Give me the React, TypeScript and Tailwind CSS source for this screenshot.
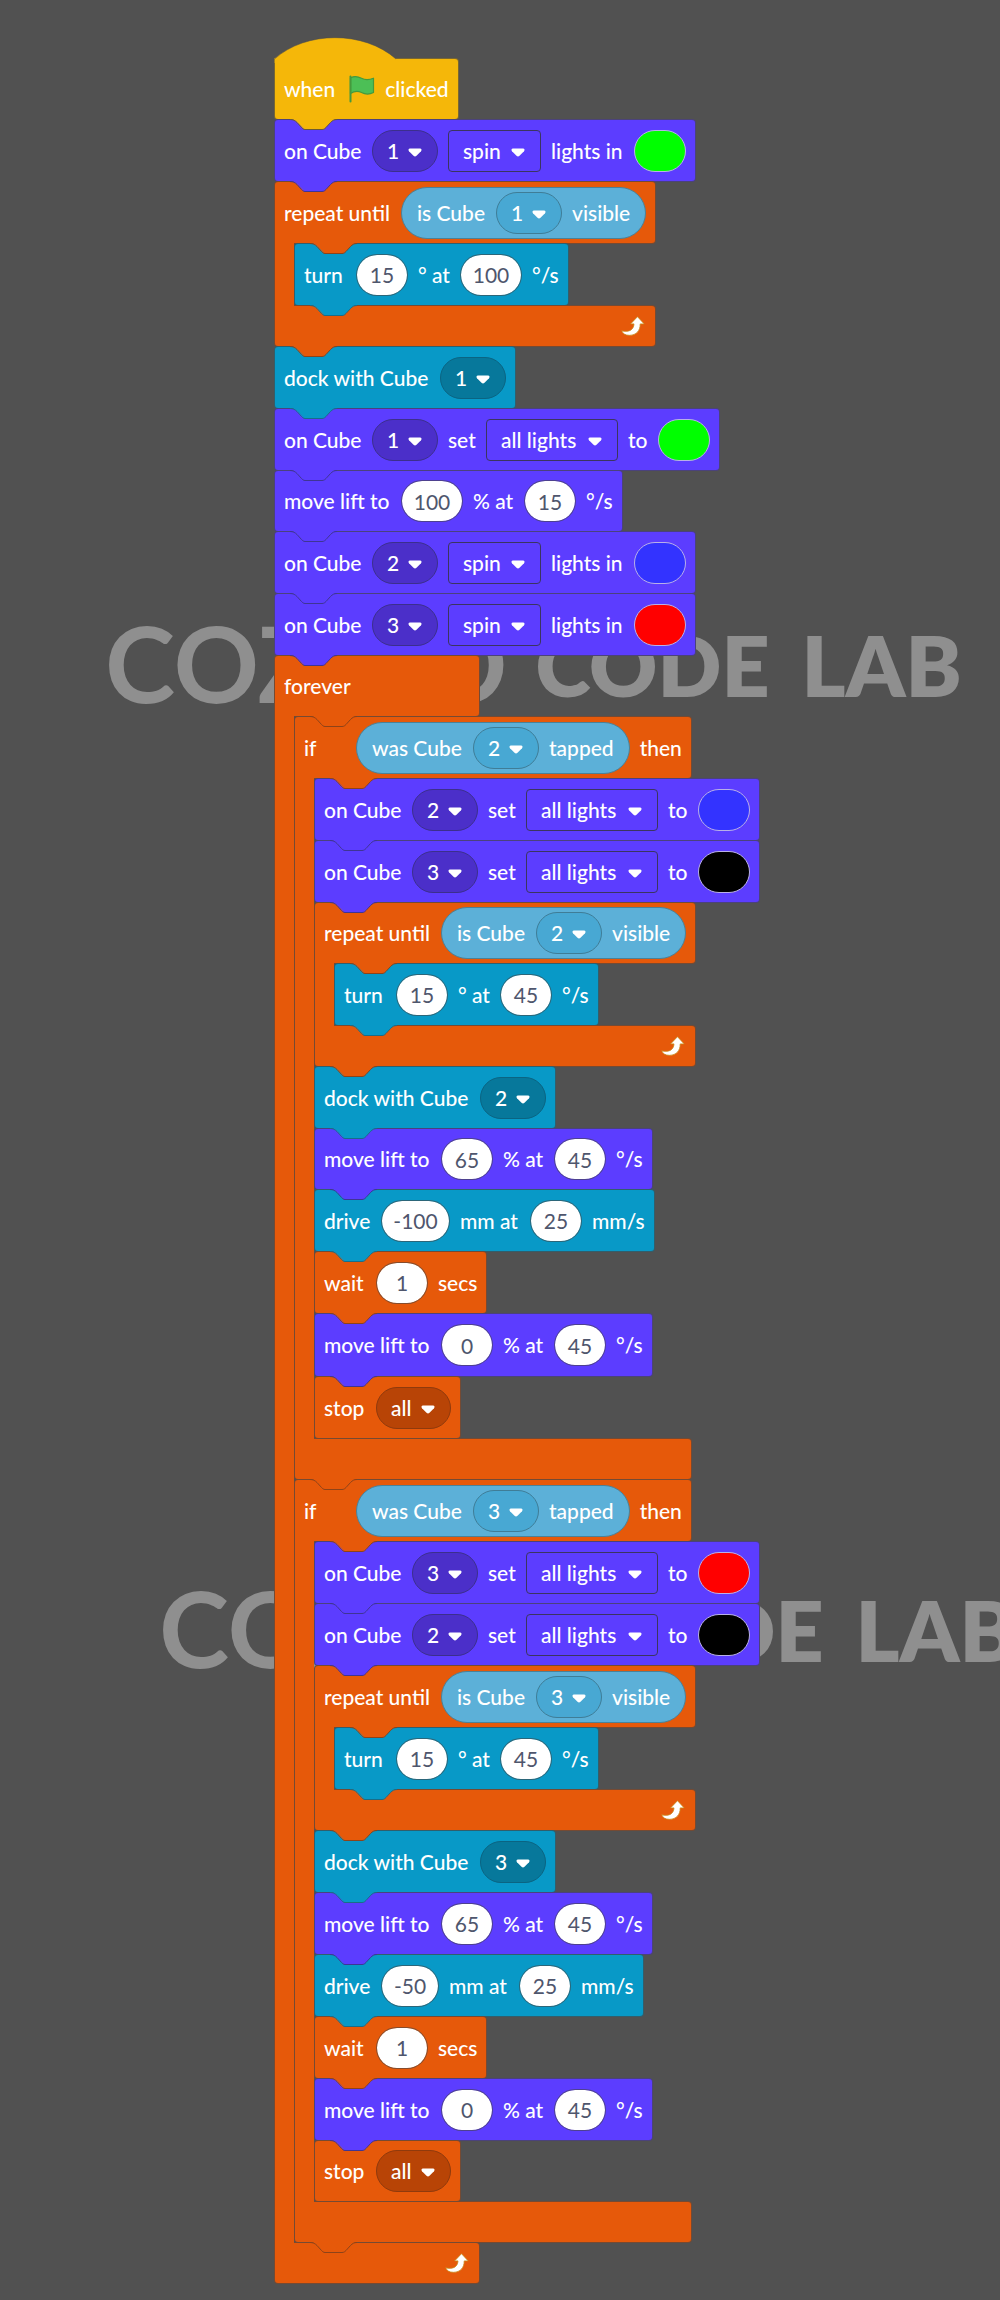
import type { ReactNode } from 'react';

type Tone = 'purple' | 'orange' | 'teal' | 'yellow';
type Size = 'compact' | 'normal' | 'tall';

const toneBg: Record<Tone, string> = {
  purple: 'bg-[#5c3dff]',
  orange: 'bg-[#e6590a]',
  teal: 'bg-[#0899c7]',
  yellow: 'bg-[#f5b709]',
};
const toneFill: Record<Tone, string> = {
  purple: 'fill-[#5c3dff]',
  orange: 'fill-[#e6590a]',
  teal: 'fill-[#0899c7]',
  yellow: 'fill-[#f5b709]',
};
const toneLine: Record<Tone, string> = {
  purple: 'stroke-[#3f3593]',
  orange: 'stroke-[#8d4319]',
  teal: 'stroke-[#1a6d88]',
  yellow: 'stroke-[#6b5a35]',
};
const sizeClass: Record<Size, string> = {
  compact: 'h-[62px]',
  normal: 'h-[63px]',
  tall: 'h-16',
};
const edge = 'border-[#444444]/70';

/* Tab under a block that plugs into the block below it */
function Tab({ tone, inset = false }: { tone: Tone; inset?: boolean }) {
  return (
    <svg
      aria-hidden="true"
      width="64"
      height="12"
      viewBox="0 0 64 12"
      className={`absolute top-full z-10 ${inset ? 'left-5' : 'left-0'}`}
    >
      <path
        className={toneFill[tone]}
        d="M15 0H62C60 0 58 1 56 3L51 8C50 9.500 49 10.500 47 10.500H31C29 10.500 28 9.500 27 8L22 3C20 1 18 0 15 0Z"
      />
      <path
        className={toneLine[tone]}
        fill="none"
        d="M15 .5C18 .5 20 1.500 22 3.500L26.500 8.500C27.500 9.500 28.500 10.500 30 10.500H47C49 10.500 50 9.500 51 8.500L55.500 3.500C57.500 1.500 59 .5 62 .5"
      />
    </svg>
  );
}

function Block({
  tone,
  size = 'normal',
  last = false,
  children,
}: {
  tone: Tone;
  size?: Size;
  last?: boolean;
  children: ReactNode;
}) {
  return (
    <div
      className={`relative -mb-px flex items-center gap-2.5 rounded border px-[9px] ${edge} ${toneBg[tone]} ${sizeClass[size]}`}
    >
      {children}
      {!last && <Tab tone={tone} />}
    </div>
  );
}

function CBlock({
  head,
  size = 'normal',
  loop = false,
  last = false,
  children,
}: {
  head: ReactNode;
  size?: Size;
  loop?: boolean;
  last?: boolean;
  children: ReactNode;
}) {
  return (
    <div className="-mb-px grid w-max">
      <div
        className={`relative -mb-px flex min-w-[206px] items-center gap-2.5 rounded rounded-bl-none border px-[9px] ${edge} ${toneBg.orange} ${sizeClass[size]}`}
      >
        {head}
        <Tab tone="orange" inset />
      </div>
      <div className="flex w-0 min-w-full">
        <div className={`relative z-[1] -mb-px w-5 shrink-0 border-l ${edge} ${toneBg.orange}`} />
        <div className="flex flex-col items-start whitespace-nowrap">{children}</div>
      </div>
      <div
        className={`relative flex h-[42px] items-center justify-end rounded rounded-tl-none border pr-2.5 ${edge} ${toneBg.orange}`}
      >
        {loop && <LoopArrow />}
        {!last && <Tab tone="orange" />}
      </div>
    </div>
  );
}

function LoopArrow() {
  return (
    <svg aria-hidden="true" width="24" height="20" viewBox="0 0 24 20">
      <path
        d="M16.500 .7L23.200 7.900H19.200C19.300 14.500 15.500 19.200 8.500 19.300C4.500 19.400 1.600 17.600 .8 14.700C6.500 16.600 12.800 14.500 13 7.900H9.600Z"
        fill="#fff"
        stroke="#c98a1c"
        strokeWidth=".8"
        strokeLinejoin="round"
      />
    </svg>
  );
}

function Flag() {
  return (
    <svg aria-hidden="true" width="26" height="28" viewBox="0 0 26 28" className="ml-1">
      <path
        d="M1.500 3C6 .5 9.500 1.800 12.500 3.300C16 5 20 5 24.500 3.200V17.500C20 19.800 16 19.300 12.500 17.500C9.500 16 6 15.500 1.500 18.500Z"
        fill="#4cbf56"
        stroke="#45993d"
        strokeWidth="1.200"
        strokeLinejoin="round"
      />
      <path d="M1.500 1.500V26.500" stroke="#45993d" strokeWidth="2" strokeLinecap="round" />
    </svg>
  );
}

function Label({ children, width = '' }: { children: ReactNode; width?: string }) {
  return <span className={`whitespace-nowrap ${width}`}>{children}</span>;
}
const lead = 'min-w-[42px]';

const menuStyle = {
  purple: 'w-[66px] rounded-full border-[#3c2f8c] bg-[#4b2fc9]',
  teal: 'w-[66px] rounded-full border-[#0b6482] bg-[#07789b]',
  sky: 'w-[66px] rounded-full border-[#3f7d97] bg-[#48a8d3]',
  rust: 'w-[75px] rounded-full border-[#8f3a0d] bg-[#b84406]',
  spin: 'w-[93px] rounded border-[#3b3560] bg-[#5c3dff]',
  lights: 'w-[132px] rounded border-[#3b3560] bg-[#5c3dff]',
};

function Menu({
  kind,
  value,
  options,
  label,
}: {
  kind: keyof typeof menuStyle;
  value: string;
  options: string[];
  label: string;
}) {
  return (
    <span className="relative flex shrink-0">
      <select
        aria-label={label}
        defaultValue={value}
        className={`h-[42px] appearance-none border pl-3.5 text-white outline-none ${menuStyle[kind]}`}
      >
        {options.map((o) => (
          <option key={o}>{o}</option>
        ))}
      </select>
      <svg
        aria-hidden="true"
        width="14"
        height="9"
        viewBox="0 0 14 9"
        className="pointer-events-none absolute top-[18px] right-4"
      >
        <path d="M2 .5H12C13.600 .5 14 2 13 3.200L8.500 7.800C7.500 8.800 6.500 8.800 5.500 7.800L1 3.200C0 2 .4 .5 2 .5Z" fill="#fff" />
      </svg>
    </span>
  );
}

function CubeMenu({ kind, cube }: { kind: 'purple' | 'teal' | 'sky'; cube: string }) {
  return <Menu kind={kind} value={cube} options={['1', '2', '3']} label="Cube" />;
}

function Num({ value, label }: { value: string; label: string }) {
  const width = value.length > 3 ? 'w-[69px]' : value === '-50' ? 'w-[58px]' : value.length > 2 ? 'w-[62px]' : 'w-[52px]';
  return (
    <input
      aria-label={label}
      defaultValue={value}
      className={`h-[42px] shrink-0 rounded-full border border-[#444444]/60 bg-white bg-clip-padding text-center text-[21px] font-normal text-[#4f566d] outline-none ${width}`}
    />
  );
}

const swatches = {
  green: 'bg-[#00ff00]',
  blue: 'bg-[#3333ff]',
  red: 'bg-[#ff0000]',
  black: 'bg-black',
};
type Swatch = keyof typeof swatches;

function Color({ color }: { color: Swatch }) {
  return (
    <button
      type="button"
      aria-label={`Light color: ${color}`}
      className={`h-[42px] w-[52px] shrink-0 rounded-full border border-[#b9b0e8] ${swatches[color]}`}
    />
  );
}

function Reporter({ children }: { children: ReactNode }) {
  return (
    <span className="flex h-[52px] shrink-0 items-center gap-2.5 rounded-full border border-[#4b8197] bg-[#5cb0d8] px-[15px]">
      {children}
    </span>
  );
}

function SpinLights({ cube, color }: { cube: string; color: Swatch }) {
  return (
    <Block tone="purple">
      <Label width="min-w-[78px]">on Cube</Label>
      <CubeMenu kind="purple" cube={cube} />
      <Menu kind="spin" value="spin" options={['spin', 'blink', 'hold']} label="Light effect" />
      <Label width="min-w-[73px]">lights in</Label>
      <Color color={color} />
    </Block>
  );
}

function SetLights({ cube, color }: { cube: string; color: Swatch }) {
  return (
    <Block tone="purple">
      <Label width="min-w-[78px]">on Cube</Label>
      <CubeMenu kind="purple" cube={cube} />
      <Label width="min-w-[28px]">set</Label>
      <Menu kind="lights" value="all lights" options={['all lights', 'light 1', 'light 2']} label="Lights" />
      <Label width="min-w-5">to</Label>
      <Color color={color} />
    </Block>
  );
}

function MoveLift({ height, speed, size }: { height: string; speed: string; size?: Size }) {
  return (
    <Block tone="purple" size={size}>
      <Label width="min-w-[107px]">move lift to</Label>
      <Num value={height} label="Lift height" />
      <Label width="min-w-[41px]">% at</Label>
      <Num value={speed} label="Lift speed" />
      <Label>°/s</Label>
    </Block>
  );
}

function Turn({ speed }: { speed: string }) {
  return (
    <Block tone="teal">
      <Label width={lead}>turn</Label>
      <Num value="15" label="Angle" />
      <Label>° at</Label>
      <Num value={speed} label="Turn speed" />
      <Label>°/s</Label>
    </Block>
  );
}

function Dock({ cube }: { cube: string }) {
  return (
    <Block tone="teal">
      <Label width="min-w-[146px]">dock with Cube</Label>
      <CubeMenu kind="teal" cube={cube} />
    </Block>
  );
}

function Drive({ distance }: { distance: string }) {
  return (
    <Block tone="teal">
      <Label width="min-w-[47px]">drive</Label>
      <Num value={distance} label="Distance" />
      <Label width="min-w-[60px]">mm at</Label>
      <Num value="25" label="Drive speed" />
      <Label>mm/s</Label>
    </Block>
  );
}

function Wait() {
  return (
    <Block tone="orange">
      <Label width={lead}>wait</Label>
      <Num value="1" label="Seconds" />
      <Label>secs</Label>
    </Block>
  );
}

function Stop({ size }: { size?: Size }) {
  return (
    <Block tone="orange" size={size} last>
      <Label width={lead}>stop</Label>
      <Menu kind="rust" value="all" options={['all', 'this script']} label="Stop" />
    </Block>
  );
}

function RepeatUntilVisible({ cube, speed, size }: { cube: string; speed: string; size?: Size }) {
  return (
    <CBlock
      loop
      size={size}
      head={
        <>
          <Label width="min-w-[107px]">repeat until</Label>
          <Reporter>
            <Label width="min-w-[69px]">is Cube</Label>
            <CubeMenu kind="sky" cube={cube} />
            <Label>visible</Label>
          </Reporter>
        </>
      }
    >
      <Turn speed={speed} />
    </CBlock>
  );
}

function IfTapped({ cube, children }: { cube: string; children: ReactNode }) {
  return (
    <CBlock
      head={
        <>
          <Label width={lead}>if</Label>
          <Reporter>
            <Label width="min-w-[91px]">was Cube</Label>
            <CubeMenu kind="sky" cube={cube} />
            <Label>tapped</Label>
          </Reporter>
          <Label>then</Label>
        </>
      }
    >
      {children}
    </CBlock>
  );
}

function Hat() {
  return (
    <div
      className={`relative -mb-px flex h-[62px] items-center gap-2.5 rounded rounded-tl-none border px-[9px] ${edge} ${toneBg.yellow}`}
    >
      <svg aria-hidden="true" width="126" height="26" viewBox="0 0 126 26" className="absolute bottom-full -left-px -mb-1">
        <path className={toneFill.yellow} d="M0 26V22C32 -6.500 90 -6.500 122 22L126 26Z" />
        <path d="M.5 26V22C32 -6.500 90 -6.500 122 22" fill="none" stroke="#4a4a4a" strokeOpacity=".5" />
      </svg>
      <Label>when</Label>
      <Flag />
      <Label>clicked</Label>
      <Tab tone="yellow" />
    </div>
  );
}

function Watermark({ place }: { place: string }) {
  return (
    <div
      aria-hidden="true"
      className={`absolute flex items-end leading-none whitespace-nowrap text-[#8f8f8f] ${place}`}
    >
      <span className="text-[106px] font-bold">COZMO</span>
      <span className="ml-7 pb-2 text-[84px] font-extrabold">CODE</span>
      <span className="ml-8 pb-2 text-[84px] font-extrabold">LAB</span>
    </div>
  );
}

export default function App() {
  return (
    <main className="relative min-h-screen overflow-hidden bg-[#515151] pt-[58px] pb-4 pl-[274px] font-[Lato,sans-serif] text-[21px] leading-7 font-medium text-white">
      <Watermark place="top-[609px] left-[105px]" />
      <Watermark place="top-[1574px] left-[159px]" />
      <div className="relative flex flex-col items-start">
        <Hat />
        <SpinLights cube="1" color="green" />
        <RepeatUntilVisible cube="1" speed="100" />
        <Dock cube="1" />
        <SetLights cube="1" color="green" />
        <MoveLift height="100" speed="15" size="compact" />
        <SpinLights cube="2" color="blue" />
        <SpinLights cube="3" color="red" />
        <CBlock head={<Label>forever</Label>} size="compact" loop last>
          <IfTapped cube="2">
            <SetLights cube="2" color="blue" />
            <SetLights cube="3" color="black" />
            <RepeatUntilVisible cube="2" speed="45" size="compact" />
            <Dock cube="2" />
            <MoveLift height="65" speed="45" size="compact" />
            <Drive distance="-100" />
            <Wait />
            <MoveLift height="0" speed="45" size="tall" />
            <Stop />
          </IfTapped>
          <IfTapped cube="3">
            <SetLights cube="3" color="red" />
            <SetLights cube="2" color="black" />
            <RepeatUntilVisible cube="3" speed="45" />
            <Dock cube="3" />
            <MoveLift height="65" speed="45" />
            <Drive distance="-50" />
            <Wait />
            <MoveLift height="0" speed="45" />
            <Stop size="compact" />
          </IfTapped>
        </CBlock>
      </div>
    </main>
  );
}
